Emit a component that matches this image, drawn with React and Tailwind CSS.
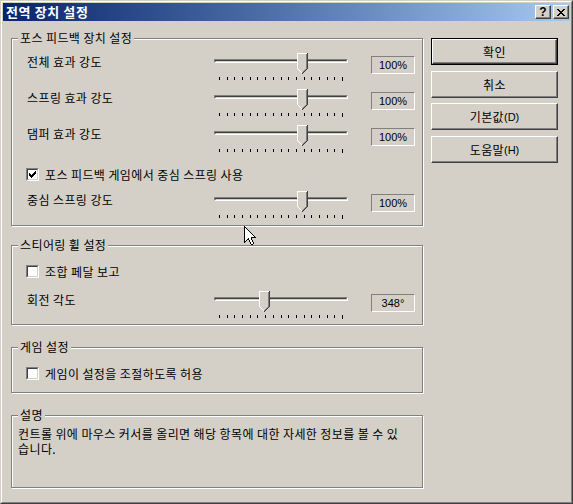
import React from "react";

const LAT = "font-['Liberation_Sans',sans-serif] tracking-normal";

function px(key, x, y, c, w = 1, h = 1) {
  return <rect key={key} x={x} y={y} width={w} height={h} fill={c} />;
}

function Thumb() {
  const r = [];
  r.push(px("f1", 1, 1, "#d4d0c8", 8, 15));
  r.push(px("f2", 2, 16, "#d4d0c8", 6, 1));
  r.push(px("f3", 3, 17, "#d4d0c8", 4, 1));
  r.push(px("f4", 4, 18, "#d4d0c8", 2, 1));
  r.push(px("wl", 0, 0, "#ffffff", 1, 16));
  r.push(px("wt", 0, 0, "#ffffff", 10, 1));
  r.push(px("dr", 10, 0, "#404040", 1, 16));
  r.push(px("gr", 9, 1, "#808080", 1, 15));
  [[1, 16], [2, 17], [3, 18], [4, 19]].forEach(([x, y], i) => r.push(px("wd" + i, x, y, "#ffffff")));
  [[9, 16], [8, 17], [7, 18], [6, 19], [5, 20]].forEach(([x, y], i) => r.push(px("dd" + i, x, y, "#404040")));
  [[8, 16], [7, 17], [6, 18], [5, 19]].forEach(([x, y], i) => r.push(px("gd" + i, x, y, "#808080")));
  return (
    <svg width="11" height="21" viewBox="0 0 11 21" shapeRendering="crispEdges">
      {r}
    </svg>
  );
}

function Slider({ pos }) {
  return (
    <div className="relative w-[134px] h-[28px] shrink-0">
      <div className="mt-[6px] h-[4px] border-t border-l border-t-[#808080] border-l-[#808080] border-b border-r border-b-white border-r-white">
        <div className="h-[2px] border-t border-l border-t-[#404040] border-l-[#404040] border-b border-r border-b-[#d4d0c8] border-r-[#d4d0c8]" />
      </div>
      <div className="mt-[14px] flex justify-between items-start px-[5px]">
        {Array.from({ length: 17 }).map((_, i) => (
          <div key={i} className={i === 16 ? "w-px h-[4px] bg-black" : "w-px h-[3px] bg-black"} />
        ))}
      </div>
      <div className="absolute top-0" style={{ left: pos }}>
        <Thumb />
      </div>
    </div>
  );
}

function ValueBox({ value }) {
  return (
    <div
      className={`w-[44px] h-[18px] flex items-center justify-center border-t border-l border-t-[#808080] border-l-[#808080] border-b border-r border-b-white border-r-white text-[11px] ${LAT}`}
    >
      {value}
    </div>
  );
}

function SliderRow({ label, pos, value, className = "" }) {
  return (
    <div className={`flex items-start pl-[15px] ${className}`}>
      <div className="w-[187px] mt-[2px] leading-[14px] whitespace-nowrap">{label}</div>
      <Slider pos={pos} />
      <div className="ml-[23px] mt-[3px]">
        <ValueBox value={value} />
      </div>
    </div>
  );
}

function Check({ checked }) {
  const cols = [3, 4, 5, 4, 3, 2, 1];
  return (
    <div className="w-[13px] h-[13px] shrink-0 border-t border-l border-t-[#808080] border-l-[#808080] border-b border-r border-b-white border-r-white">
      <div className="w-full h-full bg-white border-t border-l border-t-[#404040] border-l-[#404040] border-b border-r border-b-[#d4d0c8] border-r-[#d4d0c8]">
        {checked && (
          <svg width="9" height="9" viewBox="0 0 9 9" shapeRendering="crispEdges" className="block">
            {cols.map((y, i) => (
              <rect key={i} x={1 + i} y={y} width="1" height="3" fill="#000" />
            ))}
          </svg>
        )}
      </div>
    </div>
  );
}

function CheckRow({ checked, label, className = "" }) {
  return (
    <div className={`flex items-center h-[15px] pl-[14px] ${className}`}>
      <Check checked={checked} />
      <span className="ml-[6px] leading-[14px] whitespace-nowrap">{label}</span>
    </div>
  );
}

function Group({ title, className = "", children }) {
  return (
    <div
      className={`relative w-[412px] border border-[#808080] shadow-[inset_1px_1px_0_#ffffff,1px_1px_0_#ffffff] ${className}`}
    >
      <div className="absolute -top-[8px] left-[6px] px-[2px] bg-[#d4d0c8] leading-[14px] whitespace-nowrap">
        {title}
      </div>
      {children}
    </div>
  );
}

function Btn({ children, isDefault = false, className = "" }) {
  const inner = (
    <div className="w-full h-full flex items-center justify-center border-t border-l border-t-white border-l-white border-b border-r border-b-[#404040] border-r-[#404040] shadow-[inset_-1px_-1px_0_#808080] leading-[14px]">
      {children}
    </div>
  );
  if (isDefault) {
    return <div className={`w-[127px] h-[27px] border border-black ${className}`}>{inner}</div>;
  }
  return <div className={`w-[127px] h-[27px] ${className}`}>{inner}</div>;
}

const CURSOR = [
  "X",
  "XX",
  "X.X",
  "X..X",
  "X...X",
  "X....X",
  "X.....X",
  "X......X",
  "X.......X",
  "X........X",
  "X.........X",
  "X......XXXXX",
  "X...X..X",
  "X..XX..X",
  "X.X  X..X",
  "XX   X..X",
  "X     X..X",
  "      X..X",
  "       XX",
];

function Cursor() {
  const r = [];
  CURSOR.forEach((row, y) => {
    row.split("").forEach((c, x) => {
      if (c === "X") r.push(px(`${x}-${y}`, x, y, "#000"));
      else if (c === ".") r.push(px(`${x}-${y}`, x, y, "#fff"));
    });
  });
  return (
    <svg width="12" height="19" viewBox="0 0 12 19" shapeRendering="crispEdges">
      {r}
    </svg>
  );
}

function CloseGlyph() {
  const rows = ["XX....XX", ".XX..XX.", "..XXXX..", "...XX...", "..XXXX..", ".XX..XX.", "XX....XX"];
  const r = [];
  rows.forEach((row, y) =>
    row.split("").forEach((c, x) => {
      if (c === "X") r.push(px(`${x}-${y}`, x, y, "#000"));
    })
  );
  return (
    <svg width="8" height="7" viewBox="0 0 8 7" shapeRendering="crispEdges">
      {r}
    </svg>
  );
}

function TitleBtn({ children }) {
  return (
    <div className="w-[16px] h-[14px] bg-[#d4d0c8] flex items-center justify-center border-t border-l border-t-white border-l-white border-b border-r border-b-[#404040] border-r-[#404040] shadow-[inset_-1px_-1px_0_#808080]">
      {children}
    </div>
  );
}

export default function App() {
  return (
    <div className="relative w-[573px] h-[504px] bg-[#d4d0c8] border border-t-[#d4d0c8] border-l-[#d4d0c8] border-b-[#404040] border-r-[#404040] font-['Noto_Sans_CJK_KR',sans-serif] text-[12px] tracking-[0.4px] text-black overflow-hidden">
      <div className="w-full h-full border border-t-white border-l-white border-b-[#808080] border-r-[#808080] p-[1px] flex flex-col">
        {/* Title bar */}
        <div className="h-[18px] shrink-0 bg-linear-to-r from-[#0a246a] to-[#a6caf0] flex items-center justify-between pl-[3px] pr-[1px]">
          <span className="text-white font-bold text-[13px] leading-[16px] tracking-[0.6px] whitespace-nowrap">전역 장치 설정</span>
          <div className="flex gap-[2px]">
            <TitleBtn>
              <span className={`${LAT} font-bold text-[12px] leading-[12px]`}>?</span>
            </TitleBtn>
            <TitleBtn>
              <CloseGlyph />
            </TitleBtn>
          </div>
        </div>

        {/* Body */}
        <div className="flex pl-[8px] pt-[17px]">
          <div className="flex flex-col w-[412px]">
            <Group title="포스 피드백 장치 설정" className="h-[188px]">
              <div className="pt-[14px]">
                <SliderRow className="h-[36px]" label="전체 효과 강도" pos={83} value="100%" />
                <SliderRow className="h-[36px]" label="스프링 효과 강도" pos={83} value="100%" />
                <SliderRow className="h-[36px]" label="댐퍼 효과 강도" pos={83} value="100%" />
                <CheckRow className="mt-[6px]" checked label="포스 피드백 게임에서 중심 스프링 사용" />
                <SliderRow className="mt-[9px]" label="중심 스프링 강도" pos={83} value="100%" />
              </div>
            </Group>

            <Group title="스티어링 휠 설정" className="h-[80px] mt-[19px]">
              <div className="pt-[18px]">
                <CheckRow label="조합 페달 보고" />
                <SliderRow className="mt-[12px]" label="회전 각도" pos={45} value="348°" />
              </div>
            </Group>

            <Group title="게임 설정" className="h-[46px] mt-[22px]">
              <div className="pt-[18px]">
                <CheckRow label="게임이 설정을 조절하도록 허용" />
              </div>
            </Group>

            <Group title="설명" className="h-[73px] mt-[22px]">
              <div className="pt-[10px] pl-[6px] whitespace-nowrap">
                <div className="h-[15px] leading-[15px]">
                  컨트롤 위에 마우스 커서를 올리면 해당 항목에 대한 자세한 정보를 볼 수 있
                </div>
                <div className="h-[15px] leading-[15px]">습니다.</div>
              </div>
            </Group>
          </div>

          <div className="flex flex-col ml-[8px]">
            <Btn isDefault>확인</Btn>
            <Btn className="mt-[6px]">취소</Btn>
            <Btn className="mt-[5px]">
              기본값<span className={`${LAT} text-[11px]`}>(D)</span>
            </Btn>
            <Btn className="mt-[6px]">
              도움말<span className={`${LAT} text-[11px]`}>(H)</span>
            </Btn>
          </div>
        </div>
      </div>

      <div className="absolute left-[243px] top-[225px]">
        <Cursor />
      </div>
    </div>
  );
}
